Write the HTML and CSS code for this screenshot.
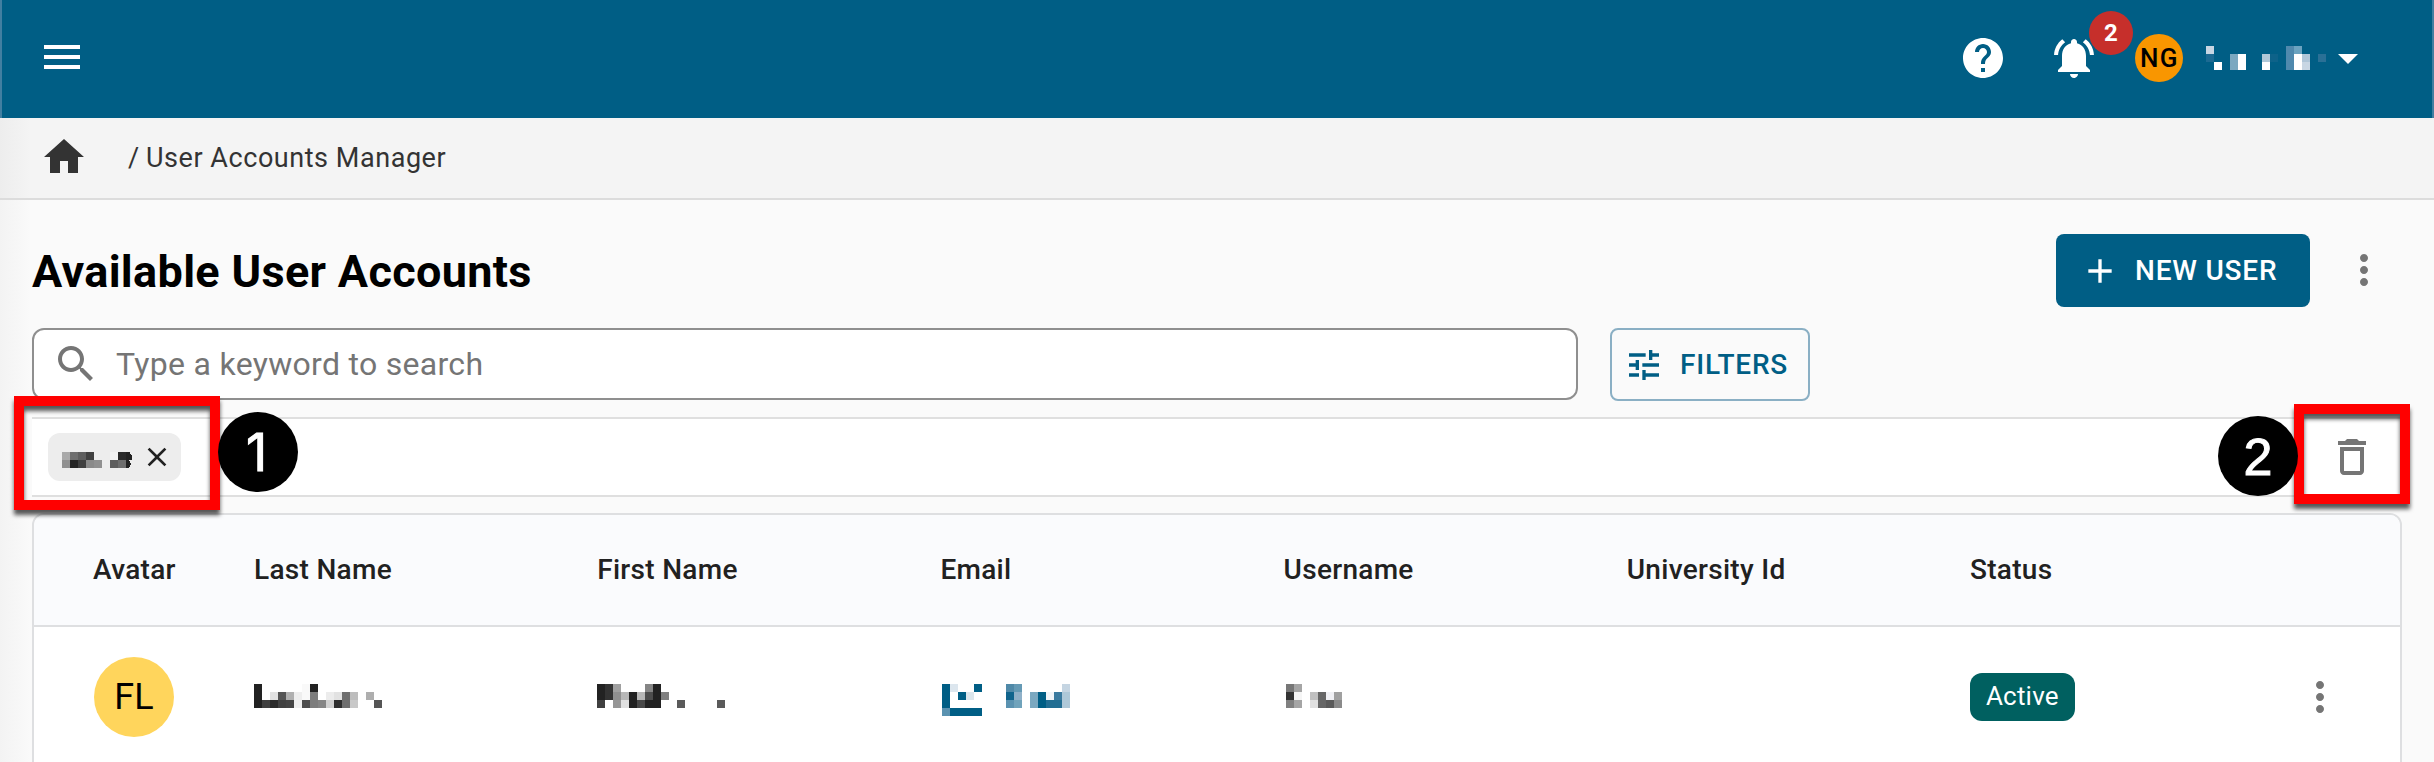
FILE: index.html
```html
<!DOCTYPE html>
<html lang="en">
<head>
<meta charset="UTF-8">
<title>User Accounts Manager</title>
<link rel="stylesheet" href="styles.css">
</head>
<body>

<header class="topbar">
<svg class="icon menu" viewBox="0 0 24 24"><path d="M3 18h18v-2H3v2zm0-5h18v-2H3v2zm0-7v2h18V6H3z"/></svg>
<div class="topbar-right">
<svg class="icon help" viewBox="0 0 24 24"><path d="M12 2C6.48 2 2 6.48 2 12s4.48 10 10 10 10-4.48 10-10S17.52 2 12 2zm1 17h-2v-2h2v2zm2.07-7.75l-.9.92C13.45 12.9 13 13.5 13 15h-2v-.5c0-1.1.45-2.1 1.17-2.83l1.24-1.26c.37-.36.59-.86.59-1.41 0-1.1-.9-2-2-2s-2 .9-2 2H8c0-2.21 1.79-4 4-4s4 1.79 4 4c0 .88-.36 1.68-.93 2.25z"/></svg>
<div class="bell">
<svg class="icon" viewBox="0 0 24 24"><path d="M7.58 4.08L6.15 2.65C3.75 4.48 2.17 7.3 2.03 10.5h2c.15-2.65 1.51-4.97 3.55-6.42zm12.39 6.42h2c-.15-3.2-1.73-6.02-4.12-7.85l-1.42 1.43c2.02 1.45 3.39 3.77 3.54 6.42zM18 11c0-3.07-1.64-5.64-4.5-6.32V4c0-.83-.67-1.5-1.5-1.5s-1.5.67-1.5 1.5v.68C7.63 5.36 6 7.92 6 11v5l-2 2v1h16v-1l-2-2v-5zm-6 11c.14 0 .27-.01.4-.04.65-.14 1.18-.58 1.44-1.18.1-.24.15-.5.15-.78h-4c.01 1.1.9 2 2.01 2z"/></svg>
<span class="badge">2</span>
</div>
<div class="avatar avatar-small">NG</div>
<svg class="mosaic account" width="120" height="24" viewBox="0 0 15 3">
<rect x="0" y="0" fill="#c8d6e3"/><rect x="10" y="0" fill="#4f89ad"/><rect x="11" y="0" fill="#6ba3c0"/>
<rect x="0" y="1" fill="#1d6a92"/><rect x="3" y="1" fill="#7ba8c0"/><rect x="4" y="1" fill="#fff"/><rect x="7" y="1" fill="#b0c8d8"/><rect x="8" y="1" fill="#0d6289"/><rect x="10" y="1" fill="#4f89ad"/><rect x="11" y="1" fill="#fff"/><rect x="12" y="1" fill="#b0c6d8"/><rect x="14" y="1" fill="#2a7096"/>
<rect x="1" y="2" fill="#fff"/><rect x="3" y="2" fill="#7ba8c0"/><rect x="4" y="2" fill="#fff"/><rect x="7" y="2" fill="#fff"/><rect x="10" y="2" fill="#4f89ad"/><rect x="11" y="2" fill="#fff"/><rect x="12" y="2" fill="#c8d6e3"/>
</svg>
<svg class="icon" viewBox="0 0 24 24"><path d="M7 10l5 5 5-5z"/></svg>
</div>
</header>

<nav class="breadcrumb">
<svg class="icon" viewBox="0 0 24 24"><path d="M10 20v-6h4v6h5v-8h3L12 3 2 12h3v8z"/></svg>
<span class="slash">/</span><span class="crumb">User Accounts Manager</span>
</nav>

<main>
<div class="title-row">
<h1>Available User Accounts</h1>
<button class="button button-primary">
<svg viewBox="0 0 24 24"><path d="M19 13h-6v6h-2v-6H5v-2h6V5h2v6h6v2z"/></svg>
<span>NEW USER</span>
</button>
<svg class="icon more" viewBox="0 0 24 24"><path d="M12 8c1.1 0 2-.9 2-2s-.9-2-2-2-2 .9-2 2 .9 2 2 2zm0 2c-1.1 0-2 .9-2 2s.9 2 2 2 2-.9 2-2-.9-2-2-2zm0 6c-1.1 0-2 .9-2 2s.9 2 2 2 2-.9 2-2-.9-2-2-2z"/></svg>
</div>

<div class="search-row">
<label class="search">
<svg class="icon" viewBox="0 0 24 24"><path d="M15.5 14h-.79l-.28-.27C15.41 12.59 16 11.11 16 9.5 16 5.91 13.09 3 9.5 3S3 5.91 3 9.5 5.91 16 9.5 16c1.61 0 3.09-.59 4.23-1.57l.27.28v.79l5 4.99L20.49 19l-4.99-5zm-6 0C7.01 14 5 11.99 5 9.5S7.01 5 9.5 5 14 7.01 14 9.5 11.99 14 9.5 14z"/></svg>
<input type="text" placeholder="Type a keyword to search">
</label>
<button class="button button-outline">
<svg viewBox="0 0 24 24"><path d="M3 17v2h6v-2H3zM3 5v2h10V5H3zm10 16v-2h8v-2h-8v-2h-2v6h2zM7 9v2H3v2h4v2h2V9H7zm14 4v-2H11v2h10zm-6-4h2V7h4V5h-4V3h-2v6z"/></svg>
<span>FILTERS</span>
</button>
</div>

<div class="filter-bar">
<div class="chip">
<svg class="mosaic" width="72" height="16" viewBox="0 0 9 2">
<rect x="0" y="0" fill="#a9a9a9"/><rect x="1" y="0" fill="#6e6e6e"/><rect x="2" y="0" fill="#5e5e5e"/><rect x="3" y="0" fill="#404040"/><rect x="6" y="0" fill="#f2f2f2"/><rect x="7" y="0" fill="#2a2a2a"/>
<rect x="0" y="1" fill="#909090"/><rect x="1" y="1" fill="#262626"/><rect x="2" y="1" fill="#404040"/><rect x="3" y="1" fill="#8a8a8a"/><rect x="4" y="1" fill="#909090"/><rect x="6" y="1" fill="#5e5e5e"/><rect x="7" y="1" fill="#6e6e6e"/>
<path fill="#222" d="M8 0h.4l.3.4v.6h-.3l.2.5-.2.5H8z"/>
</svg>
<svg class="close" viewBox="0 0 24 24"><path d="M19 6.41L17.59 5 12 10.59 6.41 5 5 6.41 10.59 12 5 17.59 6.41 19 12 13.41 17.59 19 19 17.59 13.41 12z"/></svg>
</div>
<svg class="icon trash" viewBox="0 0 24 24"><path d="M6 19c0 1.1.9 2 2 2h8c1.1 0 2-.9 2-2V7H6v12zM8 9h8v10H8V9zm7.5-5l-1-1h-5l-1 1H5v2h14V4z"/></svg>
</div>

<div class="table">
<div class="row head">
<div>Avatar</div><div>Last Name</div><div>First Name</div><div>Email</div><div>Username</div><div>University Id</div><div>Status</div>
</div>
<div class="row">
<div><div class="avatar">FL</div></div>
<div>
<svg class="mosaic" width="128" height="32" viewBox="0 0 16 4">
<rect x="0" y="0" fill="#222"/><rect x="6" y="0" fill="#f9f9f9"/><rect x="7" y="0" fill="#222"/>
<rect x="0" y="1" fill="#222"/><rect x="2" y="1" fill="#e2e2e2"/><rect x="3" y="1" fill="#555"/><rect x="4" y="1" fill="#b0b0b0"/><rect x="5" y="1" fill="#eee"/><rect x="6" y="1" fill="#f9f9f9"/><rect x="7" y="1" fill="#7d7d7d"/><rect x="9" y="1" fill="#ececec"/><rect x="10" y="1" fill="#e2e2e2"/><rect x="11" y="1" fill="#6e6e6e"/><rect x="12" y="1" fill="#bdbdbd"/><rect x="14" y="1" fill="#aeaeae"/>
<rect x="0" y="2" fill="#222"/><rect x="1" y="2" fill="#404040"/><rect x="2" y="2" fill="#2a2a2a"/><rect x="3" y="2" fill="#404040"/><rect x="4" y="2" fill="#444"/><rect x="5" y="2" fill="#eee"/><rect x="6" y="2" fill="#4d4d4d"/><rect x="7" y="2" fill="#7d7d7d"/><rect x="8" y="2" fill="#858585"/><rect x="9" y="2" fill="#d0d0d0"/><rect x="10" y="2" fill="#2e2e2e"/><rect x="11" y="2" fill="#6e6e6e"/><rect x="12" y="2" fill="#c8c8c8"/><rect x="15" y="2" fill="#555"/>
</svg>
</div>
<div>
<svg class="mosaic" width="128" height="32" viewBox="0 0 16 4">
<rect x="0" y="0" fill="#222"/><rect x="1" y="0" fill="#333"/><rect x="2" y="0" fill="#a0a0a0"/><rect x="6" y="0" fill="#858585"/><rect x="7" y="0" fill="#222"/>
<rect x="0" y="1" fill="#222"/><rect x="1" y="1" fill="#333"/><rect x="2" y="1" fill="#909090"/><rect x="3" y="1" fill="#b8b8b8"/><rect x="4" y="1" fill="#222"/><rect x="5" y="1" fill="#b8b8b8"/><rect x="6" y="1" fill="#4d4d4d"/><rect x="7" y="1" fill="#222"/><rect x="8" y="1" fill="#808080"/>
<rect x="0" y="2" fill="#404040"/><rect x="2" y="2" fill="#969696"/><rect x="3" y="2" fill="#e0e0e0"/><rect x="4" y="2" fill="#222"/><rect x="5" y="2" fill="#484848"/><rect x="6" y="2" fill="#222"/><rect x="7" y="2" fill="#222"/><rect x="10" y="2" fill="#5a5a5a"/><rect x="15" y="2" fill="#5a5a5a"/>
</svg>
</div>
<div class="email">
<svg class="mosaic" width="128" height="32" viewBox="0 0 16 4">
<rect x="0" y="0" fill="#005e85"/><rect x="1" y="0" fill="#dce6ee"/><rect x="4" y="0" fill="#005e85"/><rect x="8" y="0" fill="#4f89a8"/><rect x="9" y="0" fill="#659ab5"/><rect x="15" y="0" fill="#c5d5e2"/>
<rect x="0" y="1" fill="#005e85"/><rect x="2" y="1" fill="#005e85"/><rect x="3" y="1" fill="#dce6ec"/><rect x="8" y="1" fill="#10648d"/><rect x="9" y="1" fill="#8fb0c8"/><rect x="11" y="1" fill="#7ba8c0"/><rect x="12" y="1" fill="#005e85"/><rect x="13" y="1" fill="#f0f4f8"/><rect x="14" y="1" fill="#3a7a9f"/><rect x="15" y="1" fill="#aec8d8"/>
<rect x="0" y="2" fill="#005e85"/><rect x="8" y="2" fill="#5a92b0"/><rect x="9" y="2" fill="#70a3bb"/><rect x="11" y="2" fill="#7ba8c0"/><rect x="12" y="2" fill="#005e85"/><rect x="13" y="2" fill="#226e93"/><rect x="14" y="2" fill="#226e93"/><rect x="15" y="2" fill="#aec8d8"/>
<rect x="0" y="3" fill="#5a92b0"/><rect x="1" y="3" fill="#005e85"/><rect x="2" y="3" fill="#005e85"/><rect x="3" y="3" fill="#005e85"/><rect x="4" y="3" fill="#005e85"/>
</svg>
</div>
<div class="username">
<svg class="mosaic" width="128" height="32" viewBox="0 0 16 4">
<rect x="0" y="0" fill="#777"/><rect x="1" y="0" fill="#a5a5a5"/>
<rect x="0" y="1" fill="#333"/><rect x="1" y="1" fill="#f5f5f5"/><rect x="3" y="1" fill="#c0c0c0"/><rect x="4" y="1" fill="#666"/><rect x="5" y="1" fill="#f0f0f4"/><rect x="6" y="1" fill="#a0a0a0"/>
<rect x="0" y="2" fill="#808080"/><rect x="1" y="2" fill="#a5a5a5"/><rect x="3" y="2" fill="#e0e0e0"/><rect x="4" y="2" fill="#666"/><rect x="5" y="2" fill="#5a5a5a"/><rect x="6" y="2" fill="#8a8a8a"/>
</svg>
</div>
<div></div>
<div><span class="status">Active</span></div>
<div><svg class="icon more" viewBox="0 0 24 24"><path d="M12 8c1.1 0 2-.9 2-2s-.9-2-2-2-2 .9-2 2 .9 2 2 2zm0 2c-1.1 0-2 .9-2 2s.9 2 2 2 2-.9 2-2-.9-2-2-2zm0 6c-1.1 0-2 .9-2 2s.9 2 2 2 2-.9 2-2-.9-2-2-2z"/></svg></div>
</div>
</div>
</main>

<!-- numbered callouts -->
<div class="frame frame1"></div>
<div class="frame frame2"></div>
<div class="step step1">1</div>
<div class="step step2">2</div>

</body>
</html>
```
FILE: styles.css
```css
*{box-sizing:border-box;}
body{margin:0;height:762px;overflow:hidden;position:relative;background:linear-gradient(to right,#f3f3f3,#fafafa 30px);font-family:Roboto,"Liberation Sans",sans-serif;color:#212121;}
.icon{width:48px;height:48px;flex:none;display:block;fill:currentColor;}
.mosaic{display:block;flex:none;shape-rendering:crispEdges;}
.mosaic rect{width:1px;height:1px;}

.topbar{height:118px;padding:0 60px 2px 36px;display:flex;align-items:center;justify-content:space-between;background:#005e85;color:#fff;border:solid #427fa1;border-width:0 2px;}
.menu{margin-bottom:2px;}
.topbar-right{display:flex;align-items:center;}
.bell{position:relative;margin:0 37px 0 43px;}
.badge{position:absolute;left:39px;top:-23px;width:44px;height:44px;border-radius:50%;background:#c62f2b;font-size:24px;font-weight:700;line-height:44px;text-align:center;}
.avatar{width:80px;height:80px;border-radius:50%;background:#ffd55c;color:#000;display:flex;align-items:center;justify-content:center;font-size:36px;}
.avatar-small{width:48px;height:48px;background:#f99600;font-size:26px;font-weight:500;letter-spacing:1.4px;padding-left:1px;}
.account{margin:0 0 0 23px;}
.account + .icon{margin-left:-2px;}

.breadcrumb{height:82px;padding:0 0 2px 40px;display:flex;align-items:center;background:linear-gradient(to right,#ededed,#f4f4f4 30px);border-bottom:2px solid #dcdcdc;color:#333;font-size:27px;}
.slash,.crumb{margin-top:2px;}
.slash{margin-left:40px;width:18px;}
.crumb{letter-spacing:.55px;}

main{padding:34px 32px 0;}
.title-row{display:flex;align-items:center;height:73px;}
h1{margin:2px 0 0;flex:1;color:#000;font-size:45px;font-weight:700;letter-spacing:.32px;}
.button{display:flex;align-items:center;height:73px;border-radius:8px;font-family:inherit;font-size:28px;font-weight:500;letter-spacing:.8px;padding:0;}
.button svg{width:40px;height:40px;fill:currentColor;}
.button-primary{width:254px;border:0;background:#005e85;color:#fff;padding-left:24px;}
.button-primary span{margin-left:15px;}
.title-row .more{margin:0 14px 1px 30px;}
.more{color:#757575;}

.search-row{display:flex;gap:32px;margin-top:21px;}
.search{width:1546px;height:72px;border:2px solid #8f8f8f;border-radius:12px;background:#fff;display:flex;align-items:center;padding-left:18px;color:#757575;}
.search input{flex:1;border:0;outline:0;background:none;margin-left:16px;padding:0;font:32px Roboto,"Liberation Sans",sans-serif;letter-spacing:.3px;}
.search input::placeholder{color:#757575;}
.button-outline{width:200px;border:2px solid #8aafc4;background:transparent;color:#005e85;padding-left:12px;}
.button-outline span{margin-left:16px;}

.filter-bar{height:80px;margin-top:16px;padding:0 26px 0 16px;display:flex;align-items:center;justify-content:space-between;background:#fff;border:solid #dfdfdf;border-width:2px 0;}
.chip{width:133px;height:48px;border-radius:12px;background:#ededed;display:flex;align-items:center;padding-left:14px;}
.chip .mosaic{margin-top:6px;}
.close{width:32px;height:32px;margin-left:7px;fill:#212121;}
.trash{color:#757575;}

.table{margin-top:16px;border:2px solid #dedfe1;border-radius:12px 12px 0 0;background:#fff;overflow:hidden;}
.row{display:grid;grid-template-columns:161px repeat(5,343.2px) 326px 1fr;height:140px;align-items:center;padding-left:59px;}
.head{height:112px;padding-bottom:1px;background:#fafbfd;border-bottom:2px solid #dedfe1;font-size:28px;font-weight:500;letter-spacing:.3px;}
.row .avatar{margin-left:1px;}
.row .mosaic{margin-top:6px;}
.email,.username{padding-left:2px;}
.status{display:inline-block;height:48px;border-radius:12px;background:#006060;color:#fff;padding:0 16px;font-size:26px;line-height:47px;letter-spacing:.2px;}

.frame{position:absolute;border:10px solid #f00;filter:drop-shadow(0 5px 2px rgba(0,0,0,.65));}
.frame1{left:14px;top:396px;width:206px;height:114px;}
.frame2{left:2294px;top:404px;width:116px;height:100px;}
.step{position:absolute;width:80px;height:80px;border-radius:50%;background:#000;color:#fff;font:52px/82px "Liberation Sans",Arial,sans-serif;text-align:center;-webkit-text-stroke:1px #fff;}
.step1{left:218px;top:412px;padding-right:3px;font-family:Inter,sans-serif;}
.step2{left:2218px;top:416px;}
```
